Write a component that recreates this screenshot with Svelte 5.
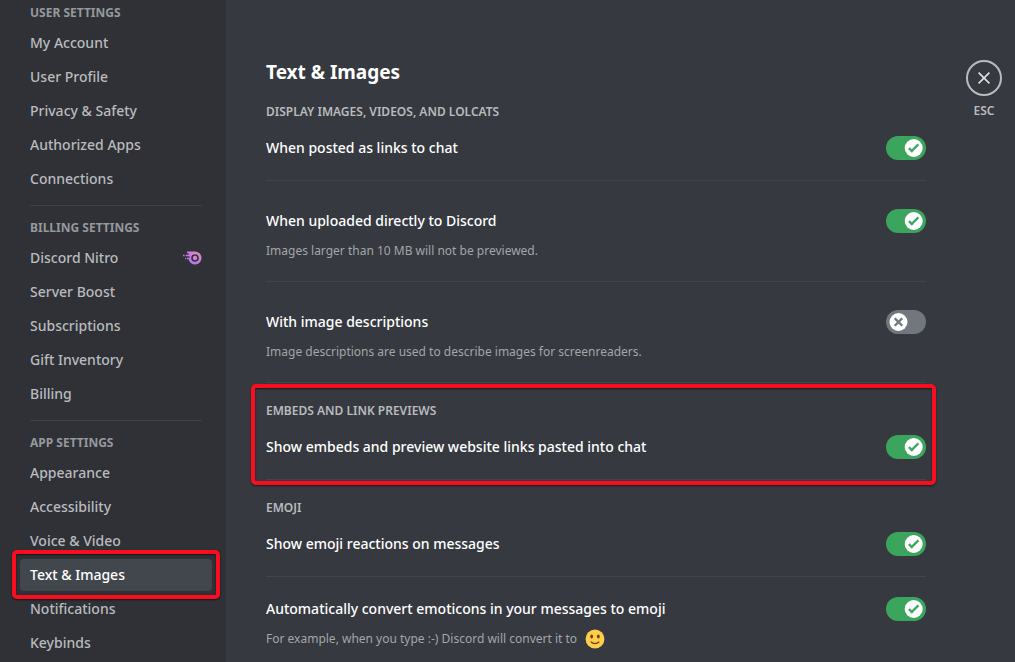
<script>
  const groups = [
    {
      title: 'User Settings',
      items: ['My Account', 'User Profile', 'Privacy & Safety', 'Authorized Apps', 'Connections'],
    },
    {
      title: 'Billing Settings',
      items: ['Discord Nitro', 'Server Boost', 'Subscriptions', 'Gift Inventory', 'Billing'],
    },
    {
      title: 'App Settings',
      items: ['Appearance', 'Accessibility', 'Voice & Video', 'Text & Images', 'Notifications', 'Keybinds'],
    },
  ];

  let selected = $state('Text & Images');

  let sections = $state([
    {
      title: 'Display images, videos, and lolcats',
      rows: [
        { id: 'links', label: 'When posted as links to chat', on: true },
        {
          id: 'uploads',
          label: 'When uploaded directly to Discord',
          note: 'Images larger than 10 MB will not be previewed.',
          on: true,
          spaced: true,
        },
        {
          id: 'descriptions',
          label: 'With image descriptions',
          note: 'Image descriptions are used to describe images for screenreaders.',
          on: false,
          spaced: true,
        },
      ],
    },
    {
      title: 'Embeds and link previews',
      marked: true,
      rows: [{ id: 'embeds', label: 'Show embeds and preview website links pasted into chat', on: true }],
    },
    {
      title: 'Emoji',
      rows: [
        { id: 'reactions', label: 'Show emoji reactions on messages', on: true },
        {
          id: 'emoticons',
          label: 'Automatically convert emoticons in your messages to emoji',
          note: 'For example, when you type :-) Discord will convert it to',
          emoji: true,
          on: true,
        },
      ],
    },
  ]);
</script>

<div class="app">
  <nav class="sidebar" aria-label="Settings">
    {#each groups as group}
      <section class="group">
        <h2 class="eyebrow">{group.title}</h2>
        {#each group.items as item}
          <div class="slot" class:marked={item === 'Text & Images'}>
            <button
              type="button"
              class="item"
              class:selected={selected === item}
              aria-current={selected === item ? 'page' : undefined}
              onclick={() => (selected = item)}
            >
              {item}
              {#if item === 'Discord Nitro'}
                <svg width="20" height="14" viewBox="0 0 20 14" aria-hidden="true">
                  <defs>
                    <linearGradient id="nitro-fill" x1="0" y1="1" x2="1" y2="0">
                      <stop offset="0.2" stop-color="#b473f5" />
                      <stop offset="1" stop-color="#e98bb5" />
                    </linearGradient>
                  </defs>
                  <path
                    fill="url(#nitro-fill)"
                    fill-rule="evenodd"
                    d="M5 .5H13A6.5 6.5 0 1 1 6.6 8.2H5V6.7H7.5V5.2H3.6V3.7H6.6V2.2H5ZM13 3.2A3.8 3.8 0 1 0 13 10.8A3.8 3.8 0 1 0 13 3.2Z"
                  />
                  <path fill="url(#nitro-fill)" d="M13 4.6 15.1 5.8V8.2L13 9.4 10.9 8.2V5.8ZM1 3.7H2.6V5.2H1ZM3.2 6.7H4.2V8.2H3.2Z" />
                </svg>
              {/if}
            </button>
          </div>
        {/each}
      </section>
    {/each}
  </nav>

  <main class="content">
    <div class="panel">
      <h1>Text &amp; Images</h1>
      {#each sections as section}
        <section class="block" class:marked={section.marked}>
          <h2 class="eyebrow">{section.title}</h2>
          {#each section.rows as row}
            <div class="row" class:spaced={row.spaced}>
              <div class="line">
                <label for={row.id}>{row.label}</label>
                <span class="switch">
                  <input type="checkbox" role="switch" id={row.id} bind:checked={row.on} />
                  <svg width="40" height="24" viewBox="0 0 40 24" aria-hidden="true">
                    <rect width="40" height="24" rx="12" fill={row.on ? '#3ba55d' : '#72767d'} />
                    {#if row.on}
                      <circle cx="27.7" cy="12" r="9" fill="#fff" />
                      <path
                        transform="translate(18.7 3) scale(.9)"
                        fill="#3ba55d"
                        stroke="#3ba55d"
                        stroke-width=".5"
                        d="M7.9 14.85 6.3 13.26 14.31 5.26 15.9 6.85ZM4.09 11.09 5.68 9.5 9.45 13.27 7.86 14.86Z"
                      />
                    {:else}
                      <circle cx="12.5" cy="12" r="9" fill="#fff" />
                      <path
                        transform="translate(3.5 3) scale(.9)"
                        fill="#72767d"
                        stroke="#72767d"
                        stroke-width=".5"
                        d="M5.13 6.73 6.72 5.14 14.86 13.27 13.26 14.86ZM13.27 5.14 14.86 6.73 6.73 14.86 5.14 13.27Z"
                      />
                    {/if}
                  </svg>
                </span>
              </div>
              {#if row.note}
                <p class="note">
                  {row.note}
                  {#if row.emoji}
                    <svg width="20" height="20" viewBox="0 0 36 36" role="img" aria-label="smile">
                      <circle cx="18" cy="18" r="17" fill="#ffcc4d" />
                      <ellipse cx="12" cy="13.5" rx="2.5" ry="3.5" fill="#664500" />
                      <ellipse cx="24" cy="13.5" rx="2.5" ry="3.5" fill="#664500" />
                      <path fill="none" stroke="#664500" stroke-width="2.2" stroke-linecap="round" d="M11 23.5C14.5 27 21.5 27 25 23.5" />
                    </svg>
                  {/if}
                </p>
              {/if}
            </div>
          {/each}
        </section>
      {/each}
    </div>

    <div class="close">
      <button type="button" aria-label="Close">
        <svg width="18" height="18" viewBox="0 0 24 24" aria-hidden="true">
          <path
            fill="#dcddde"
            d="M18.4 4L12 10.4L5.6 4L4 5.6L10.4 12L4 18.4L5.6 20L12 13.6L18.4 20L20 18.4L13.6 12L20 5.6L18.4 4Z"
          />
        </svg>
      </button>
      <span>ESC</span>
    </div>
  </main>
</div>

<style>
  :global(body) {
    margin: 0;
    background: #36393f;
  }

  .app {
    display: flex;
    height: 100vh;
    overflow: hidden;
    background: #36393f;
    font-family: 'Noto Sans', sans-serif;
    color: #b9bbbe;
  }

  h1,
  h2,
  p {
    margin: 0;
  }

  button {
    font: inherit;
    cursor: pointer;
  }

  .sidebar {
    box-sizing: border-box;
    flex: none;
    width: 226px;
    padding: 0 14px 0 20px;
    background: #2f3136;
  }

  .eyebrow {
    font-size: 12px;
    line-height: 16px;
    font-weight: 700;
    text-transform: uppercase;
  }

  .sidebar .eyebrow {
    padding: 6px 10px;
    color: #96989d;
  }

  .group:first-child {
    margin-top: -1px;
  }

  .group + .group::before {
    content: '';
    display: block;
    height: 1px;
    margin: 10px 10px 8px;
    background: #3f4147;
  }

  .slot {
    position: relative;
    margin-bottom: 2px;
  }

  .item {
    display: flex;
    align-items: center;
    justify-content: space-between;
    width: 100%;
    padding: 6px 10px;
    border: 0;
    border-radius: 4px;
    background: none;
    color: #b9bbbe;
    font-size: 14px;
    font-weight: 500;
    line-height: 20px;
    text-align: left;
  }

  .item.selected {
    background: #42464d;
    color: #fff;
  }

  .marked::after {
    content: '';
    position: absolute;
    border: 4px solid #f90d1f;
    border-radius: 5px;
    box-shadow: 0 1px 2px rgba(0, 0, 0, 0.6), inset 0 1px 2px rgba(0, 0, 0, 0.6);
    pointer-events: none;
  }

  .slot.marked::after {
    inset: -9px -8px -8px;
  }

  .content {
    display: flex;
    flex: 1;
    align-items: flex-start;
    min-width: 0;
    gap: 40px;
    padding: 60px 13px 0 40px;
  }

  .panel {
    flex: 1;
    min-width: 0;
  }

  h1 {
    margin-bottom: 20px;
    color: #fff;
    font-size: 19px;
    line-height: 24px;
    font-weight: 700;
  }

  .block {
    position: relative;
  }

  .block + .block {
    padding-top: 20px;
  }

  .block .eyebrow {
    margin-bottom: 16px;
    font-weight: 600;
  }

  .block.marked::after {
    inset: 1px -10px -5px -15px;
  }

  .row {
    padding-bottom: 20px;
    border-bottom: 1px solid #42454b;
  }

  .row + .row {
    padding-top: 20px;
  }

  .row.spaced {
    padding-top: 28px;
  }

  .line {
    display: flex;
    justify-content: space-between;
    color: #fff;
    font-size: 14px;
    line-height: 24px;
    font-weight: 500;
  }

  .switch {
    position: relative;
    flex: none;
    width: 40px;
    height: 24px;
  }

  .switch svg {
    display: block;
  }

  .switch input {
    position: absolute;
    inset: 0;
    width: 100%;
    height: 100%;
    margin: 0;
    opacity: 0;
    cursor: pointer;
  }

  .note {
    display: flex;
    gap: 8px;
    margin-top: 8px;
    font-size: 12px;
    line-height: 20px;
    color: #a3a6aa;
  }

  .close {
    display: flex;
    flex: none;
    flex-direction: column;
    align-items: center;
    gap: 6px;
    font-size: 12px;
    line-height: 18px;
    font-weight: 600;
  }

  .close button {
    display: grid;
    place-items: center;
    width: 36px;
    height: 36px;
    padding: 0;
    border: 2px solid #b9bbbe;
    border-radius: 50%;
    background: none;
  }
</style>
